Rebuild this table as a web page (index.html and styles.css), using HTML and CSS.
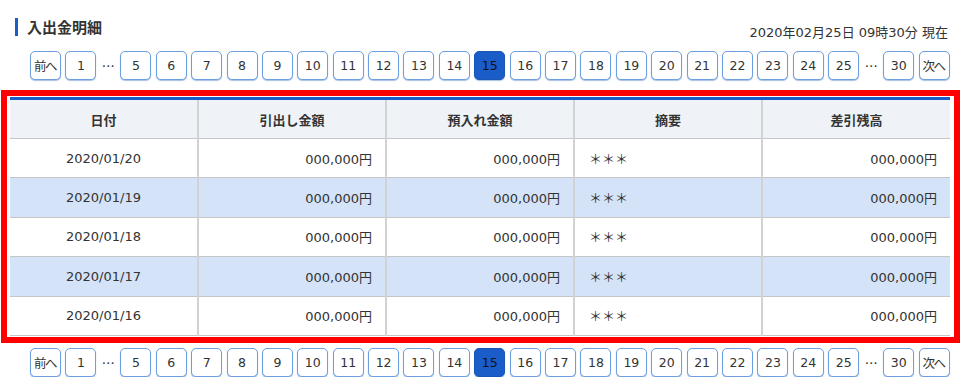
FILE: index.html
```html
<!DOCTYPE html>
<html lang="ja">
<head>
<meta charset="utf-8">
<title>入出金明細</title>
<link rel="stylesheet" href="styles.css">
</head>
<body>
<div class="page">
  <div class="head">
    <h1 class="title">入出金明細</h1>
    <div class="stamp">2020年02月25日 09時30分 現在</div>
  </div>

  <nav class="pager pager-top">
    <a class="pg pg-word">前へ</a><a class="pg">1</a><span class="dots">…</span><a class="pg">5</a><a class="pg">6</a><a class="pg">7</a><a class="pg">8</a><a class="pg">9</a><a class="pg">10</a><a class="pg">11</a><a class="pg">12</a><a class="pg">13</a><a class="pg">14</a><a class="pg active">15</a><a class="pg">16</a><a class="pg">17</a><a class="pg">18</a><a class="pg">19</a><a class="pg">20</a><a class="pg">21</a><a class="pg">22</a><a class="pg">23</a><a class="pg">24</a><a class="pg">25</a><span class="dots">…</span><a class="pg">30</a><a class="pg pg-word">次へ</a>
  </nav>

  <div class="frame">
    <table class="ledger">
      <thead>
        <tr><th>日付</th><th>引出し金額</th><th>預入れ金額</th><th>摘要</th><th>差引残高</th></tr>
      </thead>
      <tbody>
        <tr><td class="c">2020/01/20</td><td class="r">000,000円</td><td class="r">000,000円</td><td class="l">＊＊＊</td><td class="r">000,000円</td></tr>
        <tr class="alt"><td class="c">2020/01/19</td><td class="r">000,000円</td><td class="r">000,000円</td><td class="l">＊＊＊</td><td class="r">000,000円</td></tr>
        <tr><td class="c">2020/01/18</td><td class="r">000,000円</td><td class="r">000,000円</td><td class="l">＊＊＊</td><td class="r">000,000円</td></tr>
        <tr class="alt"><td class="c">2020/01/17</td><td class="r">000,000円</td><td class="r">000,000円</td><td class="l">＊＊＊</td><td class="r">000,000円</td></tr>
        <tr><td class="c">2020/01/16</td><td class="r">000,000円</td><td class="r">000,000円</td><td class="l">＊＊＊</td><td class="r">000,000円</td></tr>
      </tbody>
    </table>
  </div>

  <nav class="pager pager-bottom">
    <a class="pg pg-word">前へ</a><a class="pg">1</a><span class="dots">…</span><a class="pg">5</a><a class="pg">6</a><a class="pg">7</a><a class="pg">8</a><a class="pg">9</a><a class="pg">10</a><a class="pg">11</a><a class="pg">12</a><a class="pg">13</a><a class="pg">14</a><a class="pg active">15</a><a class="pg">16</a><a class="pg">17</a><a class="pg">18</a><a class="pg">19</a><a class="pg">20</a><a class="pg">21</a><a class="pg">22</a><a class="pg">23</a><a class="pg">24</a><a class="pg">25</a><span class="dots">…</span><a class="pg">30</a><a class="pg pg-word">次へ</a>
  </nav>
</div>
</body>
</html>
```

FILE: styles.css
```css
* { box-sizing: border-box; }
html, body {
  margin: 0;
  padding: 0;
  background: #fff;
}
body {
  font-family: "DejaVu Sans", "Noto Sans CJK JP", sans-serif;
  color: #333;
  font-size: 13px;
}
.page {
  width: 960px;
  padding-top: 18px;
}
.head {
  display: flex;
  justify-content: space-between;
  align-items: flex-start;
  padding: 0 12px 0 15px;
  height: 33px;
}
.title {
  margin: 0;
  font-family: "Noto Sans CJK JP", sans-serif;
  font-size: 15px;
  font-weight: bold;
  line-height: 18px;
  height: 18px;
  border-left: 3px solid #1a5cc8;
  padding-left: 9px;
  color: #333;
}
.stamp {
  padding-top: 6px;
  line-height: 18px;
  font-size: 13px;
  color: #333;
}
.pager {
  display: flex;
  align-items: center;
  gap: 4.4px;
  padding-left: 30px;
}
.pager-top { height: 29px; }
.pager-bottom { margin-top: 5px; }
.pg {
  display: flex;
  align-items: center;
  justify-content: center;
  width: 31px;
  height: 29px;
  border: 1.5px solid #6b9fe0;
  border-radius: 5px;
  background: #fff;
  box-shadow: 0 1px 1px rgba(60, 110, 190, 0.45);
  font-size: 12.5px;
  color: #333;
  text-decoration: none;
}
.pg-word { letter-spacing: -1.5px; padding-right: 1px; }
.pg.active {
  background: #1a5cc8;
  border-color: #1a55b8;
  color: #111;
}
.dots {
  width: 15.2px;
  text-align: center;
  color: #333;
  font-family: "Noto Sans CJK JP", sans-serif;
  font-size: 13px;
}
.frame {
  margin: 10px 0 0 1px;
  width: 959px;
  border: 6px solid #ff0000;
  padding: 1px 4px 1px 3px;
}
.ledger {
  width: 940px;
  border-collapse: collapse;
  table-layout: fixed;
  border-top: 3px solid #1a5cc8;
}
.ledger th {
  height: 40px;
  background: #eff3f7;
  font-family: "Noto Sans CJK JP", sans-serif;
  font-weight: bold;
  font-size: 13px;
  color: #333;
  text-align: center;
  border-left: 2px solid #d2d2d2;
  border-bottom: 1px solid #c6c6c6;
  padding: 0;
}
.ledger td {
  height: 39.4px;
  padding: 0 13px;
  border-left: 2px solid #d2d2d2;
  border-bottom: 1px solid #c6c6c6;
  font-size: 13px;
  color: #333;
}
.ledger td.l { font-family: "Noto Sans CJK JP", sans-serif; padding-left: 14px; }
.ledger th:first-child, .ledger td:first-child { border-left: none; }
.ledger tr.alt td { background: #d5e3f8; }
.c { text-align: center; }
.r { text-align: right; }
.l { text-align: left; }
```
